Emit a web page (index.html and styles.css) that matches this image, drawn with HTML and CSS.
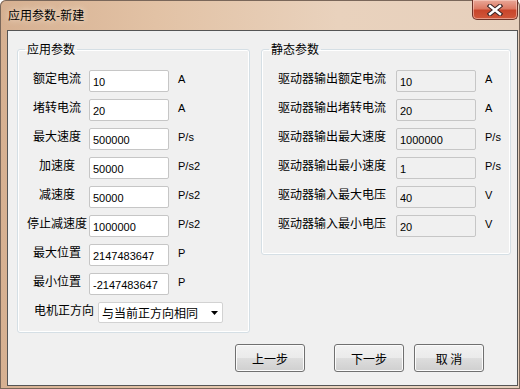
FILE: index.html
```html
<html>
    <head>
        <meta charset="utf-8">
        <link rel="stylesheet" href="styles.css">
    </head>
    <body>
        <div class="window">
            <div class="titlebar">
                <span class="title">应用参数-新建</span>
                <div class="close">
                    <svg width="16" height="12" viewBox="0 0 16 12">
                        <path d="M3 2 L13 10 M13 2 L3 10" stroke="#3e2626" stroke-width="4.6" stroke-linecap="square"/>
                        <path d="M3 2 L13 10 M13 2 L3 10" stroke="#ffffff" stroke-width="2.4" stroke-linecap="square"/>
                    </svg>
                </div>
            </div>
            <div class="client">
                <div class="groups">
                    <fieldset class="group app">
                        <legend>应用参数</legend>
                        <div class="row"><label>额定电流</label><input value="10"><span class="unit">A</span></div>
                        <div class="row"><label>堵转电流</label><input value="20"><span class="unit">A</span></div>
                        <div class="row"><label>最大速度</label><input value="500000"><span class="unit">P/s</span></div>
                        <div class="row"><label>加速度</label><input value="50000"><span class="unit">P/s2</span></div>
                        <div class="row"><label>减速度</label><input value="50000"><span class="unit">P/s2</span></div>
                        <div class="row"><label>停止减速度</label><input value="1000000"><span class="unit">P/s2</span></div>
                        <div class="row"><label>最大位置</label><input value="2147483647"><span class="unit">P</span></div>
                        <div class="row"><label>最小位置</label><input value="-2147483647"><span class="unit">P</span></div>
                        <div class="row dir">
                            <label>电机正方向</label>
                            <div class="combo">
                                <span>与当前正方向相同</span>
                                <svg width="7" height="4" viewBox="0 0 7 4"><path d="M0 0 H7 L3.5 4 Z" fill="#000"/></svg>
                            </div>
                        </div>
                    </fieldset>
                    <fieldset class="group static">
                        <legend>静态参数</legend>
                        <div class="row"><label>驱动器输出额定电流</label><input value="10" readonly><span class="unit">A</span></div>
                        <div class="row"><label>驱动器输出堵转电流</label><input value="20" readonly><span class="unit">A</span></div>
                        <div class="row"><label>驱动器输出最大速度</label><input value="1000000" readonly><span class="unit">P/s</span></div>
                        <div class="row"><label>驱动器输出最小速度</label><input value="1" readonly><span class="unit">P/s</span></div>
                        <div class="row"><label>驱动器输入最大电压</label><input value="40" readonly><span class="unit">V</span></div>
                        <div class="row"><label>驱动器输入最小电压</label><input value="20" readonly><span class="unit">V</span></div>
                    </fieldset>
                </div>
                <div class="buttons">
                    <button class="btn prev">上一步</button>
                    <button class="btn">下一步</button>
                    <button class="btn">取 消</button>
                </div>
            </div>
        </div>
    </body>
</html>
```

FILE: styles.css
```css
body {
    margin: 0;
    font-family: "Noto Sans CJK SC", sans-serif;
    font-size: 12px;
    color: #000;
}
.window {
    width: 520px;
    height: 389px;
    box-sizing: border-box;
    display: flex;
    flex-direction: column;
    border-radius: 6px 6px 0 0;
    background: linear-gradient(to right, #d6b091 0%, #e2c2a5 30%, #e9d2bd 65%, #e6d0bd 100%);
    box-shadow: inset 0 0 0 1px #7a675a;
}
.titlebar {
    height: 30px;
    display: flex;
    justify-content: space-between;
    align-items: flex-start;
}
.title {
    padding-left: 8px;
    line-height: 30px;
    text-shadow: 0 0 6px #fff3e6;
}
.close {
    width: 46px;
    height: 20px;
    margin-right: 2px;
    box-sizing: border-box;
    border: 1px solid #6e3329;
    border-top: none;
    border-radius: 0 0 5px 5px;
    background: linear-gradient(#e9a898 0%, #dc7a64 45%, #c8452b 55%, #d0573a 100%);
    box-shadow: inset 0 0 0 1px rgba(255, 220, 210, 0.5);
    display: flex;
    justify-content: center;
    align-items: center;
}
.client {
    margin-left: 7px;
    width: 511px;
    height: 356px;
    box-sizing: border-box;
    border: 1px solid #555;
    background: #f0f0f0;
    padding: 10px 0 0 9px;
}
.groups {
    display: flex;
    align-items: flex-start;
    gap: 11px;
}
.group {
    margin: 0;
    padding: 13px 0 0 0;
    box-sizing: border-box;
    border: 1px solid #d5dfe5;
    border-radius: 3px;
    box-shadow: inset 0 0 0 1px #fff;
}
.group legend {
    margin-left: 7px;
    padding: 0 2px;
    line-height: 16px;
}
.app {
    width: 233px;
    height: 292px;
}
.static {
    width: 250px;
    height: 214px;
}
.row {
    display: flex;
    align-items: flex-start;
    height: 22px;
    margin-bottom: 7px;
}
.row label {
    line-height: 16px;
    white-space: nowrap;
}
.app label {
    width: 64px;
    margin-left: 7px;
    text-align: center;
}
.static label {
    width: 108px;
    margin-left: 16px;
}
.static input {
    margin-left: 10px;
    background: #f0f0f0;
    border-color: #d4d4d4;
}
.row input {
    width: 80px;
    height: 22px;
    box-sizing: border-box;
    border: 1px solid #c6c6c6;
    border-radius: 2px;
    padding: 1px 3px 0 3px;
    font-family: "Liberation Sans", sans-serif;
    font-size: 11px;
    color: #000;
    outline: none;
}
.unit {
    margin-left: 9px;
    padding-top: 1px;
    line-height: 16px;
    font-family: "Liberation Sans", sans-serif;
    font-size: 11px;
}
.dir {
    height: 21px;
}
.app .dir label {
    width: 60px;
    margin-left: 16px;
    text-align: left;
}
.combo {
    margin-left: 4px;
    width: 125px;
    height: 21px;
    box-sizing: border-box;
    border: 1px solid #d2d2d2;
    border-radius: 2px;
    background: #fff;
    padding: 0 4px 0 3px;
    display: flex;
    justify-content: space-between;
    align-items: center;
    line-height: 16px;
}
.buttons {
    display: flex;
    justify-content: flex-end;
    gap: 10px;
    margin-top: 11px;
    padding-right: 33px;
}
.btn {
    width: 70px;
    height: 28px;
    box-sizing: border-box;
    border: 1px solid #707070;
    border-radius: 3px;
    background: linear-gradient(#f2f2f2 0%, #ebebeb 48%, #dddddd 52%, #cfcfcf 100%);
    box-shadow: inset 0 0 0 1px #fbfbfb;
    font-family: "Noto Sans CJK SC", sans-serif;
    font-size: 12px;
    color: #000;
    padding: 0;
}
.prev {
    margin-right: 19px;
}
```
